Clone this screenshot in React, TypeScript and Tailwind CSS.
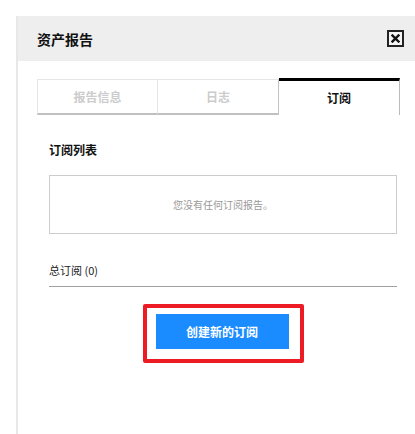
import React from "react";

const font = { fontFamily: '"Noto Sans CJK SC", "Liberation Sans", sans-serif' };

export default function App() {
  return (
    <div
      className="w-[415px] h-[434px] bg-white pt-4 pl-4 overflow-hidden"
      style={font}
    >
      <div className="h-full border-l-2 border-[#e8e8e8] flex flex-col">
        <div className="h-[45px] bg-[#eeeeee] flex items-center justify-between pl-[19px] pr-[11px]">
          <span className="text-[14px] font-bold text-[#111] leading-none">资产报告</span>
          <div className="w-[17px] h-[17px] border-2 border-[#222] flex items-center justify-center bg-[#f4f4f4]">
            <svg width="9" height="9" viewBox="0 0 9 9">
              <path d="M1.5 1.5 L7.5 7.5 M7.5 1.5 L1.5 7.5" stroke="#111" strokeWidth="2.4" strokeLinecap="square" />
            </svg>
          </div>
        </div>

        <div className="mt-[17px] ml-[19px] flex items-end h-[37px]">
          <div className="w-[121px] h-[36px] border border-[#e6e6e6] border-b-2 border-b-[#c0c0c0] flex items-center justify-center text-[12px] font-bold text-[#cccccc] leading-none">
            报告信息
          </div>
          <div className="w-[121px] h-[36px] border border-l-0 border-[#e6e6e6] border-r-[#c4c4c4] border-b-2 border-b-[#c0c0c0] flex items-center justify-center text-[12px] font-bold text-[#cccccc] leading-none">
            日志
          </div>
          <div className="w-[121px] h-[37px] border-t-[3px] border-t-black border-r border-r-[#bbbbbb] flex items-center justify-center text-[12px] font-bold text-[#111] leading-none">
            订阅
          </div>
        </div>

        <div className="ml-[31px] w-[348px] flex flex-col">
          <div className="mt-[27px] text-[12px] font-bold text-[#111] leading-[16px]">订阅列表</div>
          <div className="mt-[17px] h-[59px] border border-[#cccccc] flex items-center justify-center text-[10px] text-[#999999] leading-none">
            您没有任何订阅报告。
          </div>
          <div className="mt-[29px] text-[11px] text-[#222] leading-[14px] pb-[9px] border-b border-[#a0a0a0]">
            总订阅 (0)
          </div>
          <div className="mt-[17px] flex justify-center">
            <div className="border-4 border-[#ed1c24] rounded-[2px] pl-[9px] pr-[11px] pt-[6px] pb-[10px]">
              <div className="w-[133px] h-[35px] bg-[#1a8cff] flex items-center justify-center text-[12px] font-bold text-white leading-none">
                创建新的订阅
              </div>
            </div>
          </div>
        </div>
      </div>
    </div>
  );
}
